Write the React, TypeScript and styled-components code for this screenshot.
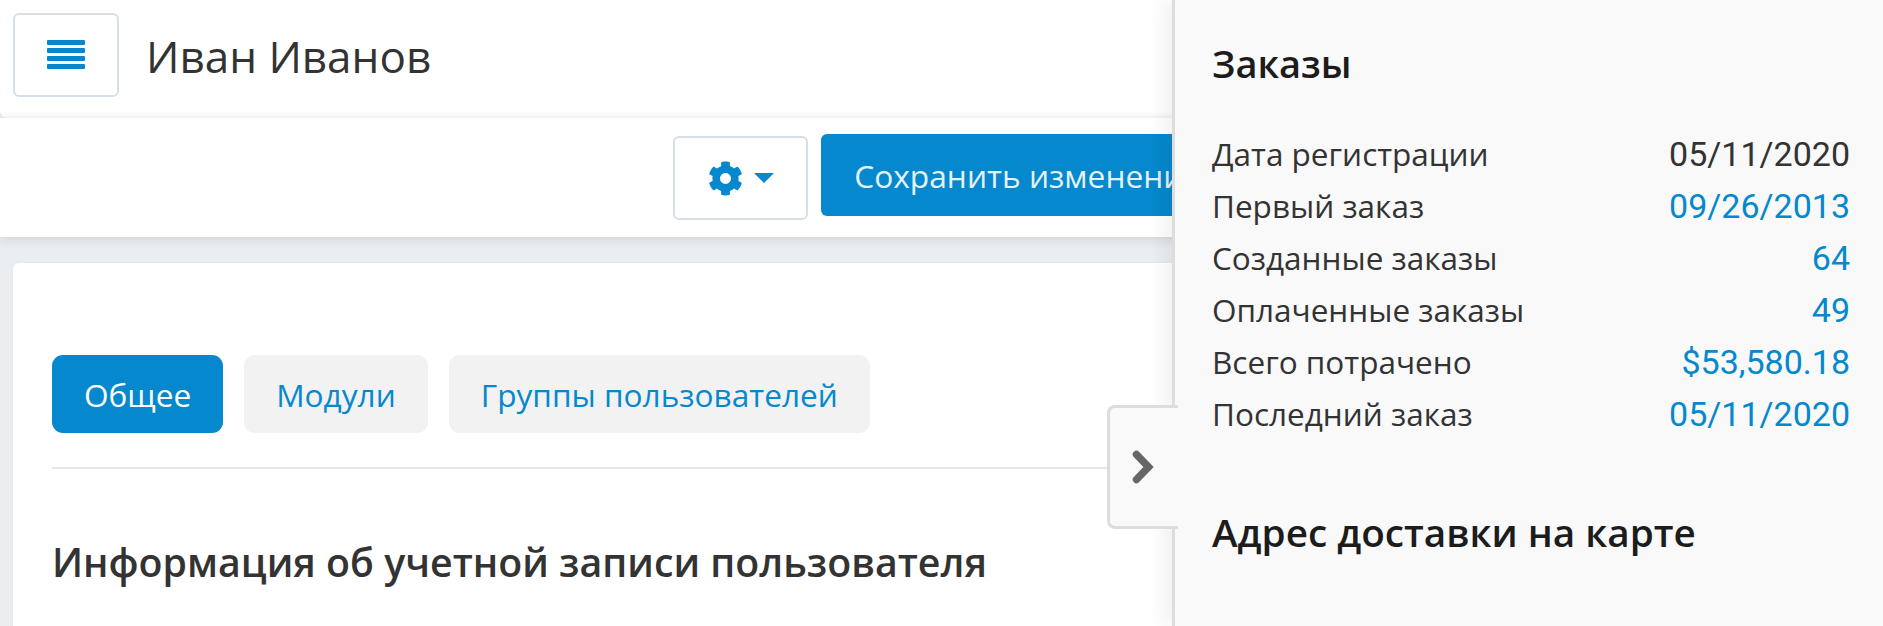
import React from 'react'
import styled, { createGlobalStyle } from 'styled-components'
import { FaCog } from 'react-icons/fa'

const GlobalStyle = createGlobalStyle`
  html, body {
    margin: 0;
    height: 626px;
    overflow: hidden;
    background: #ebeef1;
    font-family: "Open Sans", "Noto Sans", sans-serif;
    color: #333;
  }
`

const Screen = styled.div`
  position: relative;
  width: 1883px;
  height: 626px;
  overflow: hidden;
`

const TopBar = styled.header`
  display: flex;
  align-items: center;
  gap: 27px;
  height: 118px;
  padding: 0 0 9px 13px;
  box-sizing: border-box;
  background: #fff;
  border-bottom-left-radius: 8px;
`

const MenuButton = styled.button`
  display: flex;
  align-items: center;
  justify-content: center;
  width: 106px;
  height: 84px;
  padding: 0;
  background: #fff;
  border: 2px solid #d6dfe8;
  border-radius: 6px;
`

const Name = styled.h1`
  margin: 2px 0 0;
  font-size: 44px;
  font-weight: 400;
  line-height: 54px;
  color: #333;
`

const ToolBar = styled.div`
  display: flex;
  justify-content: flex-end;
  gap: 13px;
  height: 119px;
  padding: 16px 649px 0 0;
  box-sizing: border-box;
  background: #fff;
  box-shadow: 0 3px 10px rgba(60, 70, 80, 0.14), 0 -2px 6px rgba(60, 70, 80, 0.04);
`

const GearButton = styled.button`
  display: flex;
  align-items: center;
  justify-content: center;
  gap: 11px;
  width: 135px;
  height: 84px;
  margin-top: 2px;
  padding: 0;
  color: #0588cd;
  background: #fff;
  border: 2px solid #d6dfe8;
  border-radius: 6px;
  font-size: 35px;
`

const Caret = styled.span`
  width: 0;
  height: 0;
  border-style: solid;
  border-width: 10px 10px 0 10px;
  border-color: #0588cd transparent transparent transparent;
`

const SaveButton = styled.button`
  height: 82px;
  padding: 0 33px;
  font-family: inherit;
  font-size: 31.7px;
  color: #e4f2fa;
  background: #0588cd;
  border: 0;
  border-radius: 6px;
  white-space: nowrap;
`

const Card = styled.main`
  height: 363px;
  margin: 26px 0 0 13px;
  padding: 92px 0 0 39px;
  background: #fff;
  border-radius: 6px 0 0 0;
  box-shadow: 0 0 4px rgba(60, 70, 80, 0.06);
`

const Tabs = styled.nav`
  display: flex;
  gap: 21px;
  padding-bottom: 34px;
  border-bottom: 2px solid #e3e6ed;
`

const Tab = styled.a<{ $active?: boolean }>`
  display: flex;
  align-items: center;
  height: 78px;
  padding: 0 32px;
  font-size: 31.6px;
  color: ${(p) => (p.$active ? '#fff' : '#0588cd')};
  background: ${(p) => (p.$active ? '#0588cd' : '#f2f2f3')};
  border-radius: 11px;
  white-space: nowrap;
`

const SectionTitle = styled.h2`
  margin: 67px 0 0;
  font-size: 39.3px;
  font-weight: 600;
  line-height: 52px;
  color: #333;
`

const SidePanel = styled.aside`
  position: absolute;
  top: 0;
  right: 0;
  bottom: 0;
  width: 711px;
  padding: 38px 33px 0 37px;
  box-sizing: border-box;
  background: #f9f9f9;
  border-left: 3px solid #ddd;
  box-shadow: -10px 0 16px rgba(0, 0, 0, 0.05);
`

const PanelTitle = styled.h3`
  margin: 0 0 40px;
  font-size: 38px;
  font-weight: 600;
  line-height: 50px;
  color: #1c1c1c;
`

const StatRow = styled.div`
  display: flex;
  justify-content: space-between;
  height: 52.1px;
  font-size: 31.5px;
  line-height: 52px;
`

const StatValue = styled.span<{ $link?: boolean }>`
  font-family: Roboto, sans-serif;
  font-size: 34px;
  color: ${(p) => (p.$link ? '#0588cd' : '#333')};
`

const MapTitle = styled(PanelTitle)`
  margin: 66px 0 0;
  font-size: 38.7px;
`

const CollapseTab = styled.button`
  position: absolute;
  top: 405px;
  left: 1107px;
  display: flex;
  align-items: center;
  justify-content: center;
  width: 71px;
  height: 124px;
  padding: 0 2px 0 0;
  box-sizing: border-box;
  background: #f9f9f9;
  border: 3px solid #ddd;
  border-right: 0;
  border-radius: 8px 0 0 8px;
`

const MenuIcon = () => (
  <svg width="38" height="29" viewBox="0 0 38 29" fill="#0588cd">
    <rect y="0" width="38" height="5" rx="1" />
    <rect y="8" width="38" height="5" rx="1" />
    <rect y="16" width="38" height="5" rx="1" />
    <rect y="24" width="38" height="5" rx="1" />
  </svg>
)

const ChevronIcon = () => (
  <svg width="22" height="34" viewBox="0 0 22 34" fill="none">
    <path d="M4.5 4.5 L16.5 17 L4.5 29.5" stroke="#666" strokeWidth="7.5" strokeLinecap="round" strokeLinejoin="miter" />
  </svg>
)

const stats = [
  { label: 'Дата регистрации', value: '05/11/2020' },
  { label: 'Первый заказ', value: '09/26/2013', link: true },
  { label: 'Созданные заказы', value: '64', link: true },
  { label: 'Оплаченные заказы', value: '49', link: true },
  { label: 'Всего потрачено', value: '$53,580.18', link: true },
  { label: 'Последний заказ', value: '05/11/2020', link: true },
]

const App = () => {
  return (
    <Screen>
      <GlobalStyle />
      <TopBar>
        <MenuButton>
          <MenuIcon />
        </MenuButton>
        <Name>Иван Иванов</Name>
      </TopBar>
      <ToolBar>
        <GearButton>
          <FaCog />
          <Caret />
        </GearButton>
        <SaveButton>Сохранить изменения</SaveButton>
      </ToolBar>
      <Card>
        <Tabs>
          <Tab $active>Общее</Tab>
          <Tab>Модули</Tab>
          <Tab>Группы пользователей</Tab>
        </Tabs>
        <SectionTitle>Информация об учетной записи пользователя</SectionTitle>
      </Card>
      <SidePanel>
        <PanelTitle>Заказы</PanelTitle>
        {stats.map((s) => (
          <StatRow key={s.label}>
            <span>{s.label}</span>
            <StatValue $link={s.link}>{s.value}</StatValue>
          </StatRow>
        ))}
        <MapTitle>Адрес доставки на карте</MapTitle>
      </SidePanel>
      <CollapseTab>
        <ChevronIcon />
      </CollapseTab>
    </Screen>
  )
}

export default App
